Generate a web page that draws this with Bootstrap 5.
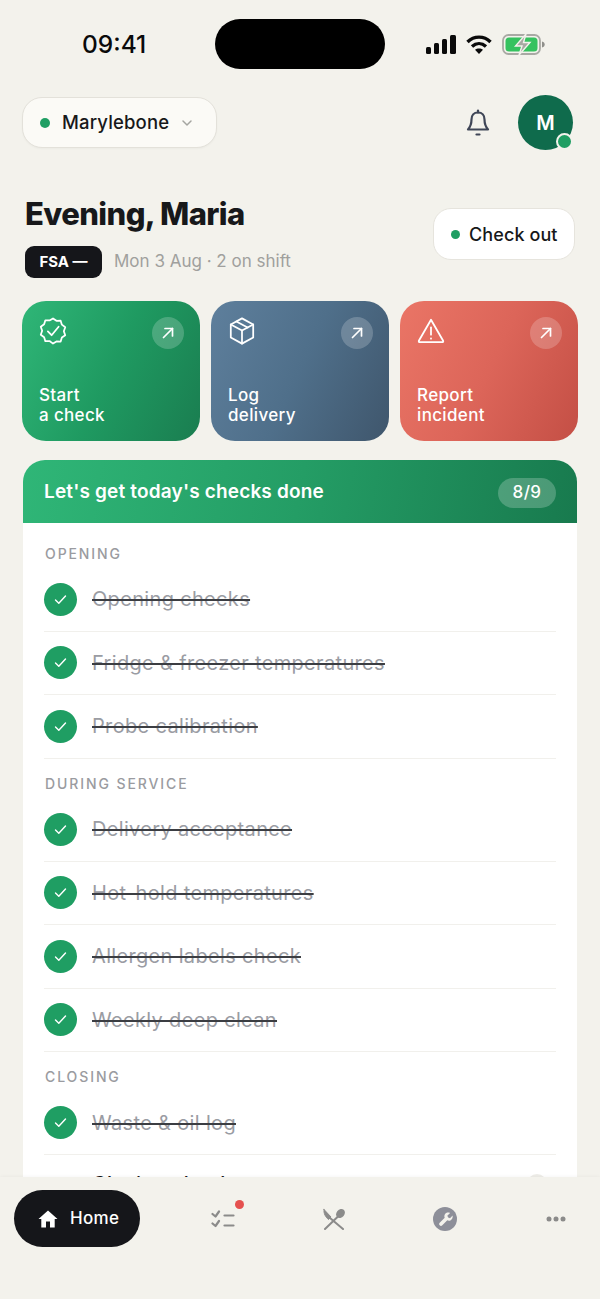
<!DOCTYPE html>
<html lang="en">

<head>
    <meta charset="UTF-8">
    <meta name="viewport" content="width=device-width, initial-scale=1.0">
    <title>Home</title>
    <link href="https://cdn.jsdelivr.net/npm/bootstrap@5.3.3/dist/css/bootstrap.min.css" rel="stylesheet">
    <style>
        html, body { height: 1299px; overflow: hidden; }
        body { background: #f3f2ec; font-family: Inter, "Liberation Sans", sans-serif; color: #17181a; }
        .phone { height: 1299px; overflow: hidden; position: relative; }

        .status-bar { height: 88px; padding: 19px 0 0 82px; }
        .clock { font-size: 24.5px; font-weight: 500; line-height: 50px; width: 133px; color: #0a0a0a; }
        .island { width: 170px; height: 50px; border-radius: 25px; background: #000; }
        .status-icons { margin-left: 41px; gap: 10px; height: 50px; }

        .top-row { padding: 8px 27px 0 22px; height: 61px; }
        .site-pill { width: 195px; height: 51px; border: 1px solid #e3e1da; border-radius: 20px; background: #fbfaf6; padding-left: 17px; font-size: 18.5px; font-weight: 500; box-shadow: 0 1px 2px rgba(0, 0, 0, .03); }
        .dot { width: 10px; height: 10px; border-radius: 50%; background: #1f9e63; display: block; flex: none; }
        .site-name { margin-left: 12px; letter-spacing: .15px; }
        .site-chevron { margin-left: 11px; }
        .avatar { width: 55px; height: 55px; border-radius: 50%; background: #0f6b4c; color: #fff; font-size: 20px; font-weight: 600; margin-left: 28px; position: relative; }
        .avatar-dot { position: absolute; right: 0; bottom: 0; width: 17px; height: 17px; border-radius: 50%; background: #1f9e63; border: 2.5px solid #f3f2ec; }

        .greet-row { padding: 40px 25px 0 25px; height: 152px; }
        .greet-title { font-size: 31px; font-weight: 800; letter-spacing: -.6px; line-height: 36px; margin: 7px 0 14px; }
        .fsa-tag { background: #15161a; color: #fff; font-size: 15px; font-weight: 700; border-radius: 9px; width: 77px; height: 32px; }
        .greet-meta { color: #a0a09d; font-size: 17px; margin-left: 12px; }
        .checkout-btn { width: 142px; height: 52px; background: #fff; border: 1px solid #e6e4dd; border-radius: 18px; font-size: 18px; font-weight: 500; letter-spacing: .1px; padding: 0 0 0 17px; color: #17181a; margin-top: 19px; }
        .checkout-btn .dot { width: 9px; height: 9px; margin-right: 9px; }

        .quick-row { padding: 0 22px; gap: 11px; height: 140px; }
        .quick-tile { flex: 1 1 0; border-radius: 24px; padding: 16px 16px 16px 17px; color: #fff; position: relative; }
        .tile-green { background: linear-gradient(115deg, #2fb677 0%, #1f9a61 50%, #1a7d50 100%); }
        .tile-slate { background: linear-gradient(115deg, #5e7f9c 0%, #4f6f8a 50%, #3f566c 100%); }
        .tile-red { background: linear-gradient(115deg, #ea7566 0%, #dc6559 50%, #c44f45 100%); }
        .tile-arrow { position: absolute; top: 16px; right: 16px; width: 32px; height: 32px; border-radius: 50%; background: rgba(255, 255, 255, .2); }
        .tile-label { font-size: 17px; font-weight: 500; line-height: 20px; letter-spacing: .35px; }

        .checks-panel { margin: 19px 23px 0; background: #fff; border-radius: 22px 22px 0 0; height: 760px; overflow: hidden; }
        .panel-head { height: 63px; padding: 2px 21px 0; color: #fff; background: linear-gradient(100deg, #2fb677 0%, #249d65 50%, #187a4e 100%); font-size: 19px; font-weight: 600; letter-spacing: .17px; }
        .count-chip { width: 58px; height: 30px; border-radius: 15px; background: rgba(255, 255, 255, .22); font-size: 17px; font-weight: 500; letter-spacing: .4px; }
        .panel-body { padding: 0 21px; }
        .group-label { font-size: 14px; font-weight: 500; letter-spacing: 1.9px; color: #9a9ba0; line-height: 17px; padding: 22px 0 0 1px; height: 45px; }
        .group-label.later { padding-top: 16px; height: 39.5px; }
        .check-row { height: 63.5px; border-bottom: 1px solid #f1f0ec; }
        .check-row.last { height: 57px; border-bottom: 0; }
        .tick { width: 33px; height: 33px; border-radius: 50%; background: #1f9e63; flex: none; margin-right: 15px; }
        .check-text { font-size: 20px; color: #9a9ca3; text-decoration: line-through; text-decoration-color: #3b3d42; text-decoration-thickness: 1.5px; letter-spacing: .33px; }
        .check-text.open { color: #17181a; text-decoration: none; font-weight: 500; }
        .tick.open { background: transparent; }
        .open-ring { width: 20px; height: 20px; border-radius: 50%; background: #eeede8; flex: none; margin-right: 9px; }

        .bottom-nav { position: absolute; left: 0; right: 0; top: 1177px; bottom: 0; background: #f3f2ec; padding: 13px 0 0 14px; box-shadow: 0 -1px 3px rgba(0, 0, 0, .03); }
        .home-pill { width: 126px; height: 57px; flex: none; margin-right: 27.5px; border-radius: 29px; background: #15161a; color: #fff; font-size: 17px; font-weight: 500; letter-spacing: .3px; padding-left: 24px; }
        .home-pill svg { margin-right: 12px; }
        .nav-slot { width: 111px; height: 57px; flex: none; position: relative; }
        .nav-badge { position: absolute; top: 9.5px; left: 67px; width: 9px; height: 9px; border-radius: 50%; background: #e5514f; }
    </style>
</head>

<body>
    <div class="phone">
        <!-- status bar -->
        <div class="status-bar d-flex align-items-start">
            <div class="clock">09:41</div>
            <div class="island"></div>
            <div class="status-icons d-flex align-items-center">
                <svg width="30" height="19" viewBox="0 0 30 19"><rect x="0" y="12" width="5" height="7" rx="1.500" fill="#0a0a0a"/><rect x="8" y="8" width="5" height="11" rx="1.500" fill="#0a0a0a"/><rect x="16" y="4" width="5" height="15" rx="1.500" fill="#0a0a0a"/><rect x="24" y="0" width="6" height="19" rx="1.500" fill="#0a0a0a"/></svg>
                <svg width="26" height="19" viewBox="0 0 26 19" fill="none" stroke="#0a0a0a" stroke-width="3.400"><path d="M1.500 7c6.500-6.500 16.500-6.500 23 0"/><path d="M6 11.500c4.200-3.800 9.800-3.800 14 0"/><path d="M13 19l-4-4.200c2.300-1.800 5.700-1.800 8 0z" fill="#0a0a0a" stroke="none"/></svg>
                <svg width="43" height="21" viewBox="0 0 43 21"><rect x="1" y="1" width="37" height="19" rx="5.500" fill="none" stroke="#a9a9a4" stroke-width="1.800"/><rect x="3.500" y="3.500" width="32" height="14" rx="3.500" fill="#35c25f"/><path d="M40 7.500v6c1.800-.4 2.700-1.500 2.700-3s-.9-2.600-2.700-3z" fill="#8f8f8b"/><path d="M24 0 13.500 12h6.500l-3 9 11-12.500h-6.500z" fill="#a7a8a2" stroke="#f3f2ec" stroke-width="1.400"/></svg>
            </div>
        </div>

        <!-- site switcher, bell, avatar -->
        <div class="top-row d-flex align-items-center">
            <div class="site-pill d-flex align-items-center">
                <span class="dot"></span>
                <span class="site-name">Marylebone</span>
                <svg class="site-chevron" width="14" height="14" viewBox="0 0 14 14" fill="none" stroke="#a5a5a1" stroke-width="1.500" stroke-linecap="round" stroke-linejoin="round"><path d="M3 5l4 4 4-4"/></svg>
            </div>
            <div class="ms-auto d-flex align-items-center">
                <svg width="24" height="28" viewBox="0 0 24 28" fill="none" stroke="#3f4657" stroke-width="2.200" stroke-linecap="round" stroke-linejoin="round"><path d="M12 3.500c-4.200 0-6.500 3.200-6.500 7 0 5.700-1.800 8-3.500 10h20c-1.700-2-3.500-4.300-3.500-10 0-3.800-2.300-7-6.500-7z"/><path d="M12 1.500v2"/><path d="M10.500 25.500h3"/></svg>
                <div class="avatar d-flex align-items-center justify-content-center">M<span class="avatar-dot"></span></div>
            </div>
        </div>

        <!-- greeting -->
        <div class="greet-row d-flex justify-content-between align-items-start">
            <div>
                <h1 class="greet-title">Evening, Maria</h1>
                <div class="d-flex align-items-center">
                    <span class="fsa-tag d-flex align-items-center justify-content-center">FSA —</span>
                    <span class="greet-meta">Mon 3 Aug · 2 on shift</span>
                </div>
            </div>
            <button class="checkout-btn btn d-flex align-items-center" type="button"><span class="dot"></span>Check out</button>
        </div>

        <!-- quick actions -->
        <div class="quick-row d-flex">
            <div class="quick-tile tile-green d-flex flex-column justify-content-between">
                <svg width="28" height="28" viewBox="0 0 30 30" fill="none" stroke="#fff" stroke-width="1.900" stroke-linecap="round" stroke-linejoin="round"><path d="M15 2l3.700 2.600 4.500-.2 1.300 4.300 3.600 2.700-1.500 4.300 1.500 4.300-3.600 2.500-1.300 4.300-4.500-.1L15 29l-3.700-2.700-4.500.1-1.300-4.300-3.600-2.500 1.500-4.300-1.500-4.300 3.600-2.700 1.300-4.300 4.500.2z" transform="translate(0 -.5)"/><path d="M9.500 15.500l4 4 7.500-9"/></svg>
                <div class="tile-label">Start<br>a check</div>
                <span class="tile-arrow d-flex align-items-center justify-content-center"><svg width="14" height="14" viewBox="0 0 14 14" fill="none" stroke="#fff" stroke-width="1.700" stroke-linecap="round" stroke-linejoin="round"><path d="M2.500 11.500l9-9"/><path d="M4 2.500h7.500V10"/></svg></span>
            </div>
            <div class="quick-tile tile-slate d-flex flex-column justify-content-between">
                <svg width="28" height="28" viewBox="0 0 30 30" fill="none" stroke="#fff" stroke-width="1.900" stroke-linecap="round" stroke-linejoin="round"><path d="M15 1.500l12 6.500v14L15 28.500 3 22V8z"/><path d="M3 8l12 6.500L27 8"/><path d="M15 14.500v14"/><path d="M9 4.800l12 6.500"/></svg>
                <div class="tile-label">Log<br>delivery</div>
                <span class="tile-arrow d-flex align-items-center justify-content-center"><svg width="14" height="14" viewBox="0 0 14 14" fill="none" stroke="#fff" stroke-width="1.700" stroke-linecap="round" stroke-linejoin="round"><path d="M2.500 11.500l9-9"/><path d="M4 2.500h7.500V10"/></svg></span>
            </div>
            <div class="quick-tile tile-red d-flex flex-column justify-content-between">
                <svg width="28" height="28" viewBox="0 0 30 30" fill="none" stroke="#fff" stroke-width="1.900" stroke-linecap="round" stroke-linejoin="round"><path d="M15 3L28 25.500a1 1 0 0 1-.9 1.500H2.900a1 1 0 0 1-.9-1.500z"/><path d="M15 11v8"/><path d="M15 22.800v.4"/></svg>
                <div class="tile-label">Report<br>incident</div>
                <span class="tile-arrow d-flex align-items-center justify-content-center"><svg width="14" height="14" viewBox="0 0 14 14" fill="none" stroke="#fff" stroke-width="1.700" stroke-linecap="round" stroke-linejoin="round"><path d="M2.500 11.500l9-9"/><path d="M4 2.500h7.500V10"/></svg></span>
            </div>
        </div>

        <!-- today's checks -->
        <div class="checks-panel">
            <div class="panel-head d-flex align-items-center justify-content-between">
                <span>Let's get today's checks done</span>
                <span class="count-chip d-flex align-items-center justify-content-center">8/9</span>
            </div>
            <div class="panel-body" id="checkList"></div>
        </div>

        <!-- bottom nav -->
        <div class="bottom-nav d-flex align-items-start">
            <div class="home-pill d-flex align-items-center">
                <svg width="20" height="20" viewBox="0 0 20 20" fill="#fff"><path d="M10 1.500L.5 10h2.800v8.500h4.700v-6h4v6h4.700V10h2.800z"/></svg>
                Home
            </div>
            <div class="nav-slot d-flex align-items-center justify-content-center">
                <svg width="24" height="18" viewBox="0 0 24 18" fill="none" stroke="#8b8b8a" stroke-width="2.200" stroke-linecap="round" stroke-linejoin="round"><path d="M1.500 4l3 2.500 3.500-5"/><path d="M1.500 13.500l3 2.500 3.500-5"/><path d="M13.500 5.500h9"/><path d="M13.500 15.500h9"/></svg>
                <span class="nav-badge"></span>
            </div>
            <div class="nav-slot d-flex align-items-center justify-content-center">
                <svg width="24" height="22" viewBox="0 0 24 22" fill="none" stroke="#8b8b8a" stroke-width="2" stroke-linecap="round"><ellipse cx="18.500" cy="5.500" rx="4" ry="5" transform="rotate(40 18.500 5.500)" fill="#8b8b8a" stroke="none"/><path d="M16 8.500L3 21"/><path d="M2 1.500L9 9 6.500 11.500C3.500 9 1.500 5.500 2 1.500z" fill="#8b8b8a" stroke-width="1" stroke-linejoin="round"/><path d="M8 10l13 11"/></svg>
            </div>
            <div class="nav-slot d-flex align-items-center justify-content-center">
                <svg width="24" height="24" viewBox="0 0 25 25"><circle cx="12.500" cy="12.500" r="12.500" fill="#8d8f99"/><path d="M17.800 6.300l-2.900 2.800.9 1.900 1.900.7 2.700-2.800c.4 2.200-.3 3.900-1.900 4.800-1.200.7-2.500.7-3.600.2l-5.200 5.200c-.8.8-2 .8-2.700 0-.8-.8-.8-1.900 0-2.700l5.200-5.200c-.5-1.100-.5-2.500.2-3.700 1-1.600 3.200-2.200 5.400-1.200z" fill="#f3f2ec"/></svg>
            </div>
            <div class="nav-slot d-flex align-items-center justify-content-center">
                <svg width="20" height="6" viewBox="0 0 20 6" fill="#8b8b8a"><circle cx="3" cy="3" r="2.500"/><circle cx="10" cy="3" r="2.500"/><circle cx="17" cy="3" r="2.500"/></svg>
            </div>
        </div>
    </div>

    <script src="https://cdn.jsdelivr.net/npm/bootstrap@5.3.3/dist/js/bootstrap.bundle.min.js"></script>
    <script>
        // Build the check list from data
        const groups = [
            { label: "OPENING", items: ["Opening checks", "Fridge & freezer temperatures", "Probe calibration"] },
            { label: "DURING SERVICE", items: ["Delivery acceptance", "Hot-hold temperatures", "Allergen labels check", "Weekly deep clean"] },
            { label: "CLOSING", items: ["Waste & oil log"] }
        ];
        const tickSvg = '<svg width="15" height="15" viewBox="0 0 15 15" fill="none" stroke="#fff" stroke-width="1.400" stroke-linecap="round" stroke-linejoin="round"><path d="M2.500 8l3.300 3.300 6.700-7.300"/></svg>';
        let html = "";
        groups.forEach(function (group, index) {
            html += '<div class="group-label' + (index ? " later" : "") + '">' + group.label + "</div>";
            group.items.forEach(function (item) {
                html += '<div class="check-row d-flex align-items-center">' +
                    '<span class="tick d-flex align-items-center justify-content-center">' + tickSvg + "</span>" +
                    '<span class="check-text">' + item.replace("&", "&amp;") + "</span></div>";
            });
        });
        html += '<div class="check-row last d-flex align-items-center"><span class="tick open"></span><span class="check-text open">Closing checks</span><span class="open-ring ms-auto"></span></div>';
        document.getElementById("checkList").innerHTML = html;
    </script>
</body>

</html>
